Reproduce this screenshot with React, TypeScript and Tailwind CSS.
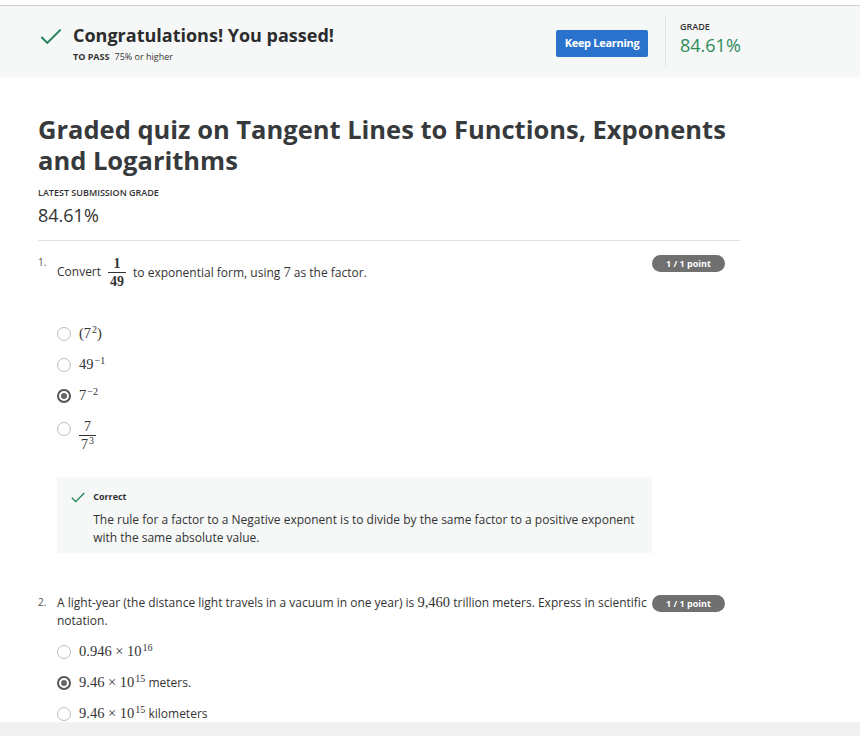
import React from "react";

const sans = { fontFamily: '"Open Sans", "Noto Sans", Arial, sans-serif' };
const serifCls = "font-['Liberation_Serif',serif]";

function Check({ className }: { className?: string }) {
  return (
    <svg viewBox="0 0 24 18" className={className} fill="none">
      <path d="M1.5 9.5 L8 16 L22.5 1.5" stroke="#1f8354" strokeWidth="2.2" />
    </svg>
  );
}

function Radio({ checked }: { checked?: boolean }) {
  return checked ? (
    <span className="inline-flex h-[14px] w-[14px] shrink-0 items-center justify-center rounded-full border-2 border-[#555]">
      <span className="h-[6px] w-[6px] rounded-full bg-[#666]" />
    </span>
  ) : (
    <span className="inline-block h-[14px] w-[14px] shrink-0 rounded-full border-[1.5px] border-[#bdbdbd]" />
  );
}

function Frac({ n, d, bold }: { n: React.ReactNode; d: React.ReactNode; bold?: boolean }) {
  return (
    <span className={`inline-flex flex-col items-center align-middle leading-[17px] text-[14px] ${serifCls} ${bold ? "font-bold" : ""}`}>
      <span className="px-[2px]">{n}</span>
      <span className="h-px w-full bg-[#333]" />
      <span className="px-[2px]">{d}</span>
    </span>
  );
}

function Badge() {
  return (
    <span className="inline-flex h-[17px] w-[73px] shrink-0 items-center justify-center rounded-full bg-[#707070] text-[9px] font-bold text-white">
      1 / 1 point
    </span>
  );
}

function M({ children }: { children: React.ReactNode }) {
  return <span className={`${serifCls} text-[14.5px] leading-[18px]`}>{children}</span>;
}

function Sup({ children }: { children: React.ReactNode }) {
  return <sup className="text-[10px] ml-[1px]">{children}</sup>;
}

function Opt({ checked, children, tall }: { checked?: boolean; children: React.ReactNode; tall?: boolean }) {
  return (
    <div className={`flex items-center gap-[8px] ${tall ? "h-[36px]" : "h-[31px]"}`}>
      <Radio checked={checked} />
      <div className="text-[12px] leading-[18px] text-[#333]">{children}</div>
    </div>
  );
}

export default function App() {
  return (
    <div style={sans} className="relative h-[736px] w-[860px] overflow-hidden bg-white text-[#333]">
      <div className="h-[5px] bg-white" />
      <div className="h-px bg-[#cfcfcf]" />
      <div className="flex h-[71px] items-start bg-[#f5f8f7] pl-[40px]">
        <div className="flex flex-1 items-start">
          <Check className="mt-[22px] h-[17px] w-[22px]" />
          <div className="ml-[11px] mt-[17px]">
            <div className="text-[18px] font-bold leading-[24px] text-[#2c2c2c]">Congratulations! You passed!</div>
            <div className="mt-[4px] text-[9px] leading-[12px] text-[#333]">
              <span className="font-bold">TO PASS</span>
              <span className="ml-[5px]">75% or higher</span>
            </div>
          </div>
        </div>
        <button className="mt-[24px] h-[27px] w-[92px] rounded-[2px] bg-[#2a73cc] text-[11px] font-bold tracking-[-0.3px] text-white">
          Keep Learning
        </button>
        <div className="ml-[17px] mt-[10px] h-[51px] w-px bg-[#e1e4e3]" />
        <div className="ml-[14px] mt-[15px] w-[180px]">
          <div className="text-[9px] font-semibold leading-[12px] text-[#333]">GRADE</div>
          <div className="mt-[1px] text-[18px] leading-[22px] text-[#2f8b5c]">84.61%</div>
        </div>
      </div>

      <div className="w-[702px] pl-[38px] box-content">
        <h1 className="mt-[37px] text-[25.5px] font-bold leading-[31px] text-[#373a3c]">
          Graded quiz on Tangent Lines to Functions, Exponents and Logarithms
        </h1>
        <div className="mt-[11px] text-[9px] font-semibold leading-[12px] text-[#333]">LATEST SUBMISSION GRADE</div>
        <div className="mt-[4px] text-[18px] leading-[24px] text-[#333]">84.61%</div>
        <div className="mt-[13px] h-px bg-[#e1e1e1]" />

        {/* Question 1 */}
        <div className="mt-[12px] flex items-start">
          <div className="w-[19px] pt-[2px] text-[10px] leading-[14px] text-[#555]">1.</div>
          <div className="w-[595px]">
            <div className="flex h-[38px] items-center gap-[7px] text-[12px]">
              <span>Convert</span>
              <Frac n="1" d="49" bold />
              <span>
                to exponential form, using <M>7</M> as the factor.
              </span>
            </div>
            <div className="mt-[27px]">
              <Opt>
                <M>
                  (7<Sup>2</Sup>)
                </M>
              </Opt>
              <Opt>
                <M>
                  49<Sup>−1</Sup>
                </M>
              </Opt>
              <Opt checked>
                <M>
                  7<Sup>−2</Sup>
                </M>
              </Opt>
              <Opt tall>
                <span className="inline-flex pt-[12px]">
                  <Frac
                    n="7"
                    d={
                      <>
                        7<Sup>3</Sup>
                      </>
                    }
                  />
                </span>
              </Opt>
            </div>
            <div className="mt-[30px] flex h-[76px] bg-[#f5f8f7] pl-[14px] pt-[14px]">
              <Check className="mt-[0px] h-[13px] w-[18px]" />
              <div className="ml-[8px]">
                <div className="text-[9px] font-bold leading-[12px] text-[#333]">Correct</div>
                <div className="mt-[8px] text-[12px] leading-[18px] text-[#333]">
                  The rule for a factor to a Negative exponent is to divide by the same factor to a positive exponent with the
                  same absolute value.
                </div>
              </div>
            </div>
          </div>
          <div className="flex pt-[2px]">
            <Badge />
          </div>
        </div>

        {/* Question 2 */}
        <div className="mt-[40px] flex items-start">
          <div className="w-[19px] text-[10px] leading-[18px] text-[#555]">2.</div>
          <div className="w-[595px]">
            <div className="text-[12px] leading-[18px]">
              <div className="whitespace-nowrap">
                <span>A light-year (the distance light travels in a vacuum in one year) is </span>
                <M>9,460</M>
                <span> trillion meters. Express in scientific</span>
              </div>
              <div>notation.</div>
            </div>
            <div className="mt-[6px]">
              <Opt>
                <M>
                  0.946 × 10<Sup>16</Sup>
                </M>
              </Opt>
              <Opt checked>
                <M>
                  9.46 × 10<Sup>15</Sup>
                </M>{" "}
                meters.
              </Opt>
              <Opt>
                <M>
                  9.46 × 10<Sup>15</Sup>
                </M>{" "}
                kilometers
              </Opt>
            </div>
          </div>
          <div className="flex pt-[2px]">
            <Badge />
          </div>
        </div>
      </div>

      <div className="fixed bottom-0 left-0 h-[14px] w-[860px] bg-[#f0f0f0]" />
    </div>
  );
}
